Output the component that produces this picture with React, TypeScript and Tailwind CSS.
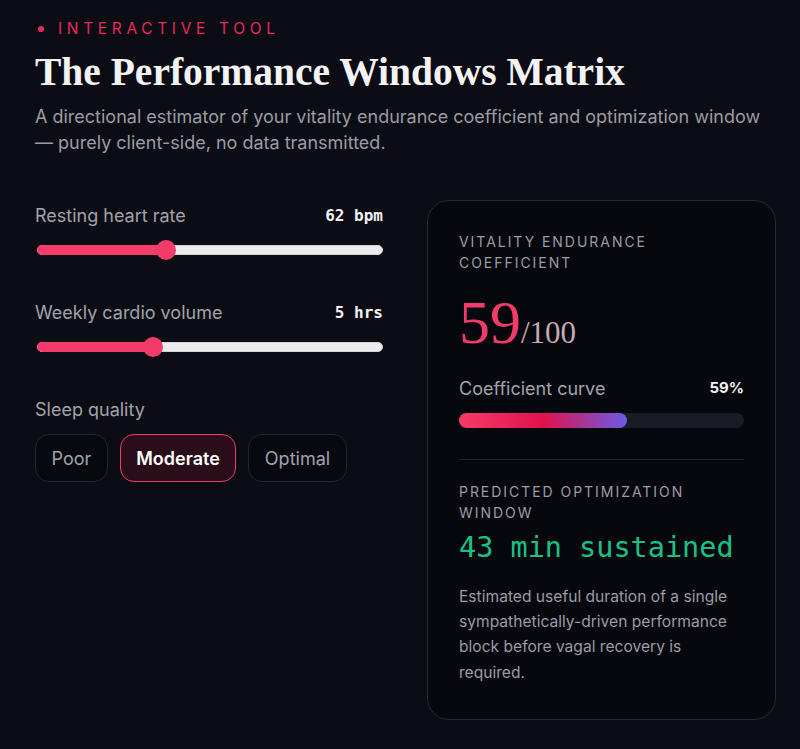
import { useState } from "react";

const sans = { fontFamily: "Inter, 'Noto Sans', sans-serif" };
const serif = { fontFamily: "'Liberation Serif', 'DejaVu Serif', serif" };
const mono = { fontFamily: "'DejaVu Sans Mono', 'Liberation Mono', monospace" };

function Slider({ label, value, pct }: { label: string; value: string; pct: number }) {
  return (
    <div>
      <div className="flex items-center justify-between">
        <span className="text-[18px] text-[#a1a3ad]">{label}</span>
        <span className="text-[16px] font-bold text-[#f1f1f4]" style={mono}>
          {value}
        </span>
      </div>
      <div className="relative mt-[11px] h-[20px]">
        <div className="absolute left-[2px] right-0 top-[5px] h-[10px] rounded-full border border-[#d4d4d8] bg-[#ececee]" />
        <div
          className="absolute left-[2px] top-[5px] h-[10px] rounded-full bg-[#f53b6a]"
          style={{ width: `${pct}%` }}
        />
        <div
          className="absolute top-0 h-[20px] w-[20px] -translate-x-1/2 rounded-full bg-[#f53b6a]"
          style={{ left: `${pct}%` }}
        />
      </div>
    </div>
  );
}

export default function App() {
  const [sleep, setSleep] = useState("Moderate");

  return (
    <div className="min-h-[749px] w-full bg-[#0c0d14] pl-[35px] pr-[24px] pt-[17px]" style={sans}>
      <div className="flex items-center gap-[14px] text-[15.5px] tracking-[0.3em] text-[#e8285e]">
        <span className="ml-[3px] h-[6px] w-[6px] rounded-full bg-[#e8285e]" />
        INTERACTIVE TOOL
      </div>
      <h1 className="mt-[10px] text-[39.5px] font-bold leading-[44px] text-[#f3f3f6]" style={serif}>
        The Performance Windows Matrix
      </h1>
      <p className="mt-[10px] text-[18px] leading-[26px] text-[#9a9ca6]">
        A directional estimator of your vitality endurance coefficient and optimization window
        — purely client-side, no data transmitted.
      </p>

      <div className="mt-[44px] flex gap-[44px]">
        <div className="w-[348px] shrink-0 pt-[2px]">
          <Slider label="Resting heart rate" value="62 bpm" pct={37.5} />
          <div className="mt-[39px]">
            <Slider label="Weekly cardio volume" value="5 hrs" pct={34} />
          </div>
          <div className="mt-[39px] text-[18px] text-[#a1a3ad]">Sleep quality</div>
          <div className="mt-[11px] flex gap-[12px]">
            {["Poor", "Moderate", "Optimal"].map((opt) => (
              <button
                key={opt}
                onClick={() => setSleep(opt)}
                className={
                  opt === sleep
                    ? "h-[48px] rounded-[14px] border-[1.5px] border-[#ee3b69] bg-[#2a0f1a] px-[15.5px] text-[18px] font-semibold text-white"
                    : "h-[48px] rounded-[14px] border border-[#24252e] bg-[#08090f] px-[15.5px] text-[18px] text-[#a1a3ad]"
                }
              >
                {opt}
              </button>
            ))}
          </div>
        </div>

        <div className="w-[349px] shrink-0 rounded-[22px] border border-[#272933] bg-[#07080d] px-[31px] pb-[34px] pt-[30px]">
          <div className="text-[14px] leading-[21px] tracking-[0.14em] text-[#9a9ca6]">
            VITALITY ENDURANCE
            <br />
            COEFFICIENT
          </div>
          <div className="mt-[16px] flex items-baseline" style={serif}>
            <span className="text-[62px] leading-[66px] text-[#f23a6b]">59</span>
            <span className="text-[31px] text-[#c9a9b7]">/100</span>
          </div>
          <div className="mt-[18px] flex items-center justify-between">
            <span className="text-[18px] text-[#a1a3ad]">Coefficient curve</span>
            <span className="text-[15px] font-bold text-[#f1f1f4]">59%</span>
          </div>
          <div className="mt-[11px] h-[15px] w-full rounded-full bg-[#1a1b24]">
            <div className="h-full w-[59%] rounded-full bg-[linear-gradient(90deg,#f53b6a_0%,#e0124d_50%,#6a5be6_100%)]" />
          </div>
          <div className="mt-[31px] h-px w-full bg-[#22242d]" />
          <div className="mt-[21px] text-[14px] leading-[21px] tracking-[0.14em] text-[#9a9ca6]">
            PREDICTED OPTIMIZATION
            <br />
            WINDOW
          </div>
          <div className="mt-[6px] text-[28.5px] leading-[38px] text-[#19c284]" style={mono}>
            43 min sustained
          </div>
          <p className="mt-[17px] text-[15.6px] leading-[25.3px] text-[#9a9ca6]">
            Estimated useful duration of a single sympathetically-driven performance block before
            vagal recovery is required.
          </p>
        </div>
      </div>
    </div>
  );
}
